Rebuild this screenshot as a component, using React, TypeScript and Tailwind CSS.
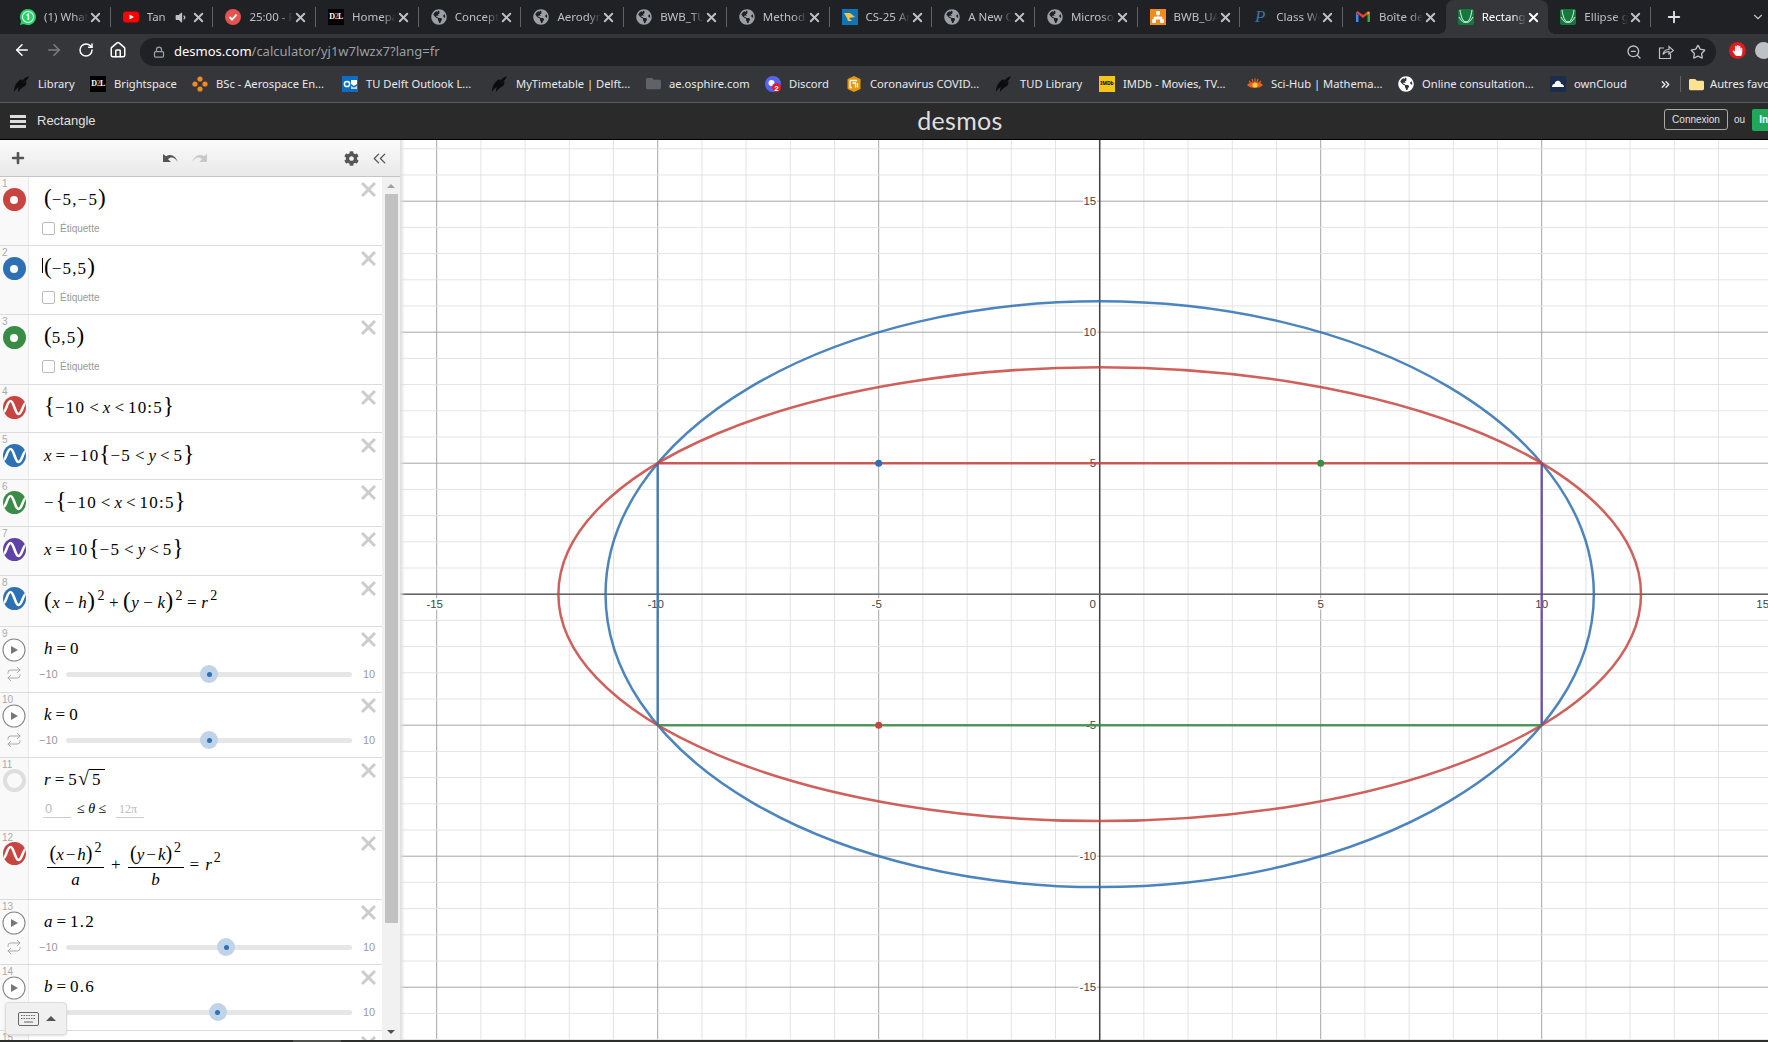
import { ArrowLeft, ArrowRight, ChevronDown, ChevronsLeft, ChevronsRight, Home, Lock, Plus, Repeat, RotateCw, Star, X, ZoomOut } from "lucide-react";
import { FaCog, FaFolder, FaGlobeAmericas, FaHandPaper, FaPlus, FaVolumeDown } from "react-icons/fa";
import type { ReactNode } from "react";

const RED = "#c74440";
const BLUE = "#2d70b3";
const GREEN = "#388c46";
const PURPLE = "#6042a6";

const Globe = ({ color = "#9aa0a6" }: { color?: string }) => <FaGlobeAmericas size={16} color={color} />;

const DesmosIcon = () => (
  <svg width="16" height="16" viewBox="0 0 16 16">
    <rect width="16" height="16" rx="2" fill="#127a3d" />
    <path d="M2 1C3 8 5 13 8 13S13 8 14 1M1 8C4 13 6 14 8 13C10 14 12 13 15 8" stroke="#fff" strokeWidth="0.9" fill="none" />
  </svg>
);

const D2L = () => (
  <span className="flex h-4 w-4 items-center justify-center bg-black font-['Liberation_Serif',serif] text-[8px] font-bold tracking-[-0.5px] text-white">
    D<span className="text-[#f08a24]">2</span>L
  </span>
);

const tabs: { label: string; icon: ReactNode; sound?: boolean }[] = [
  {
    label: "(1) WhatsApp",
    icon: (
      <svg width="16" height="16" viewBox="0 0 16 16">
        <path d="M8 0a8 8 0 0 0-6.8 12.2L0 16l3.9-1.1A8 8 0 1 0 8 0z" fill="#25d366" />
        <circle cx="8" cy="8" r="6" fill="#fff" />
        <circle cx="8" cy="8" r="5" fill="#25d366" />
        <path d="M6.6 6.4 8.4 5.2v5.8" stroke="#fff" strokeWidth="1.5" fill="none" />
      </svg>
    ),
  },
  {
    label: "Tan",
    sound: true,
    icon: (
      <svg width="16" height="16" viewBox="0 0 16 16">
        <rect y="2.5" width="16" height="11" rx="3" fill="#f00" />
        <path d="M6.5 5.5v5L11 8z" fill="#fff" />
      </svg>
    ),
  },
  {
    label: "25:00 - Pomodoro",
    icon: (
      <svg width="16" height="16" viewBox="0 0 16 16">
        <circle cx="8" cy="8" r="8" fill="#e5534f" />
        <path d="M4.5 8l2.5 2.6 4.6-5" stroke="#fff" strokeWidth="2" fill="none" />
      </svg>
    ),
  },
  { label: "Homepage", icon: <D2L /> },
  { label: "Concept", icon: <Globe /> },
  { label: "Aerodynamic", icon: <Globe /> },
  { label: "BWB_TUDelft", icon: <Globe /> },
  { label: "Methodology", icon: <Globe /> },
  {
    label: "CS-25 Amendment",
    icon: (
      <svg width="16" height="16" viewBox="0 0 16 16">
        <rect width="16" height="16" fill="#0f73b7" />
        <path d="M2 4h6l5 4-6 1 3 3H6L5 9 2 4z" fill="#f6c343" />
      </svg>
    ),
  },
  { label: "A New Concept", icon: <Globe /> },
  { label: "Microsoft", icon: <Globe /> },
  {
    label: "BWB_UAV",
    icon: (
      <svg width="16" height="16" viewBox="0 0 16 16">
        <rect width="16" height="16" fill="#f28a1c" />
        <path d="M6.5 2.5h3v3h-3zM2.5 10.5h3v3h-3zM10.5 10.5h3v3h-3zM4 10.5V8h8v2.5M8 5.5V8" fill="#fff" stroke="#fff" strokeWidth="0.8" />
      </svg>
    ),
  },
  {
    label: "Class Work",
    icon: <span className="flex w-4 justify-center font-['Liberation_Serif',serif] text-[17px] italic leading-4 text-[#3a73ad]">P</span>,
  },
  {
    label: "Boîte de réception",
    icon: (
      <svg width="16" height="16" viewBox="0 0 16 16">
        <path d="M1 3.5V13h2.5V6.5z" fill="#4285f4" />
        <path d="M15 3.5V13h-2.5V6.5z" fill="#34a853" />
        <path d="M1 3.5 8 9l7-5.5L13.5 2 8 6 2.5 2z" fill="#ea4335" />
        <path d="M12.5 2.7 15 3.5l-2.5 3z" fill="#fbbc04" />
      </svg>
    ),
  },
  { label: "Rectangle", icon: <DesmosIcon /> },
  { label: "Ellipse graph", icon: <DesmosIcon /> },
];

const Flame = () => (
  <svg width="16" height="16" viewBox="0 0 16 16">
    <path d="M15 0C11 2 9 3 8 5 8 3 7 3 6 4 3 6 0 10 0 16 2 13 3 12 5 11 4 13 4 14 4 16 6 13 9 11 11 10 12 9 13 7 12 5 11 6 10 7 9 7 12 5 14 3 15 0z" fill="#0c0c0c" />
  </svg>
);

const bookmarks: { label: string; width: string; icon: ReactNode }[] = [
  { label: "Library", width: "w-[76px]", icon: <Flame /> },
  { label: "Brightspace", width: "w-[102px]", icon: <D2L /> },
  {
    label: "BSc - Aerospace En...",
    width: "w-[150px]",
    icon: (
      <svg width="16" height="16" viewBox="0 0 16 16" fill="#f08a24">
        <circle cx="8" cy="3" r="2.6" />
        <circle cx="3" cy="8" r="2.6" />
        <circle cx="13" cy="8" r="2.6" />
        <circle cx="8" cy="13" r="2.6" />
      </svg>
    ),
  },
  {
    label: "TU Delft Outlook L...",
    width: "w-[150px]",
    icon: (
      <svg width="16" height="16" viewBox="0 0 16 16">
        <rect width="16" height="16" fill="#0f6cc4" />
        <circle cx="5" cy="8" r="2.6" stroke="#fff" strokeWidth="1.5" fill="none" />
        <path d="M9 4h6v4l-3 2-3-2z" fill="#fff" />
        <path d="M9 10l3 1.5 3-1.5v3H9z" fill="#bcdcf5" />
      </svg>
    ),
  },
  { label: "MyTimetable | Delft...", width: "w-[153px]", icon: <Flame /> },
  { label: "ae.osphire.com", width: "w-[120px]", icon: <FaFolder size={15} color="#5f6368" /> },
  {
    label: "Discord",
    width: "w-[81px]",
    icon: (
      <svg width="16" height="16" viewBox="0 0 16 16">
        <circle cx="8" cy="8" r="8" fill="#5865f2" />
        <circle cx="6.5" cy="7" r="3" fill="#fff" />
        <circle cx="11.5" cy="11.5" r="4.5" fill="#e01e2b" />
        <text x="11.5" y="14.5" textAnchor="middle" fontSize="8" fontWeight="700" fill="#fff" fontFamily="Liberation Sans">
          2
        </text>
      </svg>
    ),
  },
  {
    label: "Coronavirus COVID...",
    width: "w-[150px]",
    icon: (
      <svg width="16" height="16" viewBox="0 0 16 16">
        <path d="M8 0l6.5 3v10L8 16l-6.5-3V3z" fill="#e8950f" />
        <path d="M4 4.5h7M4 4.5v7h2M6.5 7h3v4.5M11.5 7v4.5" stroke="#fff" strokeWidth="1.3" fill="none" />
      </svg>
    ),
  },
  { label: "TUD Library", width: "w-[103px]", icon: <Flame /> },
  {
    label: "IMDb - Movies, TV...",
    width: "w-[148px]",
    icon: <span className="flex h-4 w-4 items-center justify-center bg-[#f5c518] text-[5px] font-bold text-black">IMDb</span>,
  },
  {
    label: "Sci-Hub | Mathema...",
    width: "w-[151px]",
    icon: (
      <svg width="16" height="16" viewBox="0 0 16 16">
        <path d="M0 9c3-4 13-4 16 0-3 4-13 4-16 0z" fill="#e8641b" />
        <circle cx="8" cy="9" r="2.5" fill="#f7d038" />
        <path d="M2 5l2 2M5 3l1 3M8 2.5V6M11 3l-1 3M14 5l-2 2" stroke="#e8641b" strokeWidth="1.2" />
      </svg>
    ),
  },
  { label: "Online consultation...", width: "w-[152px]", icon: <Globe color="#fff" /> },
  {
    label: "ownCloud",
    width: "w-[109px]",
    icon: (
      <svg width="16" height="16" viewBox="0 0 16 16">
        <rect width="16" height="16" fill="#1b2d4b" />
        <path d="M2 11c0-2 1-3 2.5-3C5 5.5 7 4 9 5c1.5.5 2 2 2 3 2 0 3 1.5 3 3z" fill="#fff" />
      </svg>
    ),
  },
];

const Paren = ({ children }: { children: ReactNode }) => <span className="text-[23px] font-light leading-none">{children}</span>;
const V = ({ children }: { children: ReactNode }) => <i className="italic">{children}</i>;
const Rel = ({ children }: { children: ReactNode }) => <span className="mx-[4px]">{children}</span>;
const Sup = () => <span className="ml-[2px] align-[8px] text-[14px] leading-none">2</span>;
const Num = ({ children }: { children: ReactNode }) => <span className="tracking-[1.2px]">{children}</span>;

const Frac = ({ top, bottom, width }: { top: ReactNode; bottom: ReactNode; width: string }) => (
  <span className={`inline-flex flex-col items-center align-middle ${width}`}>
    <span className="w-full whitespace-nowrap border-b border-black text-center leading-[24px]">{top}</span>
    <span className="leading-[24px]">{bottom}</span>
  </span>
);

type Row = {
  n: number;
  height: string;
  kind: "point" | "curve" | "slider" | "ring";
  color?: string;
  math: ReactNode;
  line?: string;
  thumb?: number;
};

const rows: Row[] = [
  { n: 1, height: "h-[69px]", kind: "point", color: RED, math: <><Paren>(</Paren><Num>−5,−5</Num><Paren>)</Paren></> },
  { n: 2, height: "h-[69px]", kind: "point", color: BLUE, math: <><Paren>(</Paren><Num>−5,5</Num><Paren>)</Paren></> },
  { n: 3, height: "h-[70px]", kind: "point", color: GREEN, math: <><Paren>(</Paren><Num>5,5</Num><Paren>)</Paren></> },
  { n: 4, height: "h-[48px]", kind: "curve", color: RED, math: <><Paren>{"{"}</Paren><Num>−10</Num><Rel>&lt;</Rel><V>x</V><Rel>&lt;</Rel><Num>10:5</Num><Paren>{"}"}</Paren></> },
  { n: 5, height: "h-[47px]", kind: "curve", color: BLUE, math: <><V>x</V><Rel>=</Rel><Num>−10</Num><Paren>{"{"}</Paren><Num>−5</Num><Rel>&lt;</Rel><V>y</V><Rel>&lt;</Rel><Num>5</Num><Paren>{"}"}</Paren></> },
  { n: 6, height: "h-[47px]", kind: "curve", color: GREEN, math: <><span className="mr-[2px]">−</span><Paren>{"{"}</Paren><Num>−10</Num><Rel>&lt;</Rel><V>x</V><Rel>&lt;</Rel><Num>10:5</Num><Paren>{"}"}</Paren></> },
  { n: 7, height: "h-[49px]", kind: "curve", color: PURPLE, math: <><V>x</V><Rel>=</Rel><Num>10</Num><Paren>{"{"}</Paren><Num>−5</Num><Rel>&lt;</Rel><V>y</V><Rel>&lt;</Rel><Num>5</Num><Paren>{"}"}</Paren></> },
  { n: 8, height: "h-[51px]", kind: "curve", color: BLUE, line: "h-[52px]", math: <span className="tracking-[0.5px]"><Paren>(</Paren><V>x</V><Rel>−</Rel><V>h</V><Paren>)</Paren><Sup /><Rel>+</Rel><Paren>(</Paren><V>y</V><Rel>−</Rel><V>k</V><Paren>)</Paren><Sup /><Rel>=</Rel><V>r</V><Sup /></span> },
  { n: 9, height: "h-[66px]", kind: "slider", thumb: 0, math: <><V>h</V><Rel>=</Rel><Num>0</Num></> },
  { n: 10, height: "h-[65px]", kind: "slider", thumb: 0, math: <><V>k</V><Rel>=</Rel><Num>0</Num></> },
  { n: 11, height: "h-[73px]", kind: "ring", math: <><V>r</V><Rel>=</Rel><Num>5</Num><span className="text-[20px] leading-none">√</span><span className="border-t border-black px-[3px]"><Num>5</Num></span></> },
  {
    n: 12,
    height: "h-[69px]",
    kind: "curve",
    color: RED,
    line: "h-[70px]",
    math: (
      <span className="ml-[3px]">
        <Frac width="w-[57px]" top={<><span className="text-[20px]">(</span><V>x</V><span className="mx-[2px]">−</span><V>h</V><span className="text-[20px]">)</span><Sup /></>} bottom={<V>a</V>} />
        <span className="mx-[7px]">+</span>
        <Frac width="w-[56px]" top={<><span className="text-[20px]">(</span><V>y</V><span className="mx-[2px]">−</span><V>k</V><span className="text-[20px]">)</span><Sup /></>} bottom={<V>b</V>} />
        <span className="mx-[6px]">=</span>
        <V>r</V>
        <Sup />
      </span>
    ),
  },
  { n: 13, height: "h-[65px]", kind: "slider", thumb: 1.2, math: <><V>a</V><Rel>=</Rel><Num>1.2</Num></> },
  { n: 14, height: "h-[66px]", kind: "slider", thumb: 0.6, math: <><V>b</V><Rel>=</Rel><Num>0.6</Num></> },
];

const CloseX = () => (
  <svg width="15" height="15" viewBox="0 0 15 15" className="absolute right-[6px] top-[5px]">
    <path d="M1 1l13 13M14 1 1 14" stroke="#ccc" strokeWidth="3" />
  </svg>
);

function RowIcon({ kind, color }: { kind: Row["kind"]; color?: string }) {
  if (kind === "point") {
    return (
      <span className="flex h-[23px] w-[23px] items-center justify-center rounded-full" style={{ backgroundColor: color }}>
        <span className="h-[8px] w-[8px] rounded-full bg-white" />
      </span>
    );
  }
  if (kind === "curve") {
    return (
      <svg width="23" height="23" viewBox="0 0 23 23" className="rounded-full" style={{ backgroundColor: color }}>
        <path d="M0 16C3 17 4 5 7.5 5 11 5 12 18 15.5 18 19 18 20 7 23 7" stroke="#fff" strokeWidth="2.6" fill="none" />
      </svg>
    );
  }
  if (kind === "slider") {
    return (
      <svg width="24" height="24" viewBox="0 0 24 24">
        <circle cx="12" cy="12" r="11" stroke="#888" strokeWidth="1.1" fill="#fff" />
        <path d="M9 8v8l7-4z" fill="#777" />
      </svg>
    );
  }
  return <span className="h-[23px] w-[23px] rounded-full border-[4px] border-[#dedede]" />;
}

function Slider({ value }: { value: number }) {
  return (
    <div className="flex h-[6px] items-center pl-[10px] font-['Liberation_Sans',sans-serif] text-[11px] text-[#999]">
      <span className="w-[27px]">−10</span>
      <div className="relative h-[5px] w-[286px] rounded-full bg-[#e6e6e6]">
        <span
          className="absolute top-1/2 flex h-[18px] w-[18px] -translate-x-1/2 -translate-y-1/2 items-center justify-center rounded-full bg-[#c0d3e8]"
          style={{ left: `${((value + 10) / 20) * 100}%` }}
        >
          <span className="h-[5px] w-[5px] rounded-full bg-[#2d70b3]" />
        </span>
      </div>
      <span className="ml-[11px]">10</span>
    </div>
  );
}

function ExpressionRow({ row }: { row: Row }) {
  return (
    <div className={`relative flex shrink-0 border-b border-[#dcdcdc] ${row.height}`}>
      <div className="flex w-[29px] shrink-0 flex-col border-r border-[#e8e8e8] bg-[#f9f9f9]">
        <span className="h-[11px] pl-[2px] pt-[2px] font-['Liberation_Sans',sans-serif] text-[10px] leading-[9px] text-[#aaa]">{row.n}</span>
        <span className="flex justify-center">
          <RowIcon kind={row.kind} color={row.color} />
        </span>
        {row.kind === "slider" && (
          <span className="mt-[4px] flex justify-center">
            <Repeat size={16} color="#aaa" strokeWidth={1.5} />
          </span>
        )}
      </div>
      <div className="min-w-0 flex-1">
        <div className={`flex items-center whitespace-nowrap pl-[15px] font-['Liberation_Serif',serif] text-[17px] text-black ${row.line ?? "h-[44px]"}`}>
          <span>{row.math}</span>
          {row.n === 2 && <span className="absolute left-[42px] top-[12px] h-[15px] w-px bg-black" />}
        </div>
        {row.kind === "point" && (
          <div className="flex h-[14px] items-center pl-[13px] font-['Liberation_Sans',sans-serif] text-[10px] text-[#999]">
            <span className="mr-[5px] h-[13px] w-[13px] rounded-[2px] border border-[#bbb] bg-white" />
            Étiquette
          </div>
        )}
        {row.kind === "slider" && <Slider value={row.thumb ?? 0} />}
        {row.kind === "ring" && (
          <div className="flex h-[16px] items-start pl-[14px] font-['Liberation_Serif',serif] text-[12px] text-black">
            <span className="h-[16px] w-[28px] border-b border-[#ccc] pl-[2px] font-['Liberation_Sans',sans-serif] text-[13px] leading-[14px] text-[#bbb]">0</span>
            <span className="ml-[6px] w-[39px] text-[14px] leading-[14px]">
              ≤ <i>θ</i> ≤
            </span>
            <span className="h-[16px] w-[28px] border-b border-[#ccc] pl-[3px] leading-[14px] text-[#bbb]">12π</span>
          </div>
        )}
      </div>
      <CloseX />
    </div>
  );
}

function Graph() {
  const ox = 699.7;
  const oy = 454.2;
  const ux = 44.2;
  const uy = 26.2;
  const xs = Array.from({ length: 31 }, (_, i) => i - 16);
  const ys = Array.from({ length: 37 }, (_, i) => i - 18);
  const px = (x: number) => ox + x * ux;
  const py = (y: number) => oy - y * uy;
  const xLabels = [-15, -10, -5, 5, 10, 15];
  const yLabels = [-15, -10, -5, 5, 10, 15];
  return (
    <svg width="1368" height="900" viewBox="0 0 1368 900" className="block">
      {xs.map((x) => (
        <line key={`v${x}`} x1={px(x)} x2={px(x)} y1="0" y2="900" stroke={x % 5 === 0 ? "#a6a6a6" : "#e3e3e3"} />
      ))}
      {ys.map((y) => (
        <line key={`h${y}`} y1={py(y)} y2={py(y)} x1="0" x2="1368" stroke={y % 5 === 0 ? "#a6a6a6" : "#e3e3e3"} />
      ))}
      <line x1={ox} x2={ox} y1="0" y2="900" stroke="#444" strokeWidth="1.5" />
      <line y1={oy} y2={oy} x1="0" x2="1368" stroke="#666" strokeWidth="1.5" />
      <g fontFamily="Liberation Sans, sans-serif" fontSize="11.5" fill="#444" stroke="#fff" strokeWidth="3" paintOrder="stroke">
        {xLabels.map((x) => (
          <text key={x} x={px(x) - (x < 0 ? 2 : 0)} y={oy + 14} textAnchor="middle">
            {x}
          </text>
        ))}
        <text x={ox - 7} y={oy + 14} textAnchor="middle">
          0
        </text>
        {yLabels.map((y) => (
          <text key={y} x={ox - 3.5} y={py(y) + 4} textAnchor="end">
            {y}
          </text>
        ))}
      </g>
      <g fill="none" strokeWidth="2.5" strokeOpacity="0.85">
        <ellipse cx={ox} cy={oy} rx={11.18 * ux} ry={11.18 * uy} stroke={BLUE} />
        <ellipse cx={ox} cy={oy} rx={12.247 * ux} ry={8.66 * uy} stroke={RED} />
        <line x1={px(-10)} x2={px(-10)} y1={py(5)} y2={py(-5)} stroke={BLUE} />
        <line x1={px(10)} x2={px(10)} y1={py(5)} y2={py(-5)} stroke={PURPLE} />
        <line x1={px(-10)} x2={px(10)} y1={py(5)} y2={py(5)} stroke={RED} />
        <line x1={px(-10)} x2={px(10)} y1={py(-5)} y2={py(-5)} stroke={GREEN} />
      </g>
      <circle cx={px(-5)} cy={py(5)} r="3.5" fill={BLUE} />
      <circle cx={px(5)} cy={py(5)} r="3.5" fill={GREEN} />
      <circle cx={px(-5)} cy={py(-5)} r="3.5" fill={RED} />
    </svg>
  );
}

export default function App() {
  return (
    <div className="flex h-[1042px] w-[1768px] flex-col overflow-hidden bg-[#202124] font-['Noto_Sans',sans-serif]">
      {/* tab strip */}
      <div className="flex h-[34px] shrink-0 items-center pl-2 text-[11.5px]">
        {tabs.map(({ label, icon, sound }) => {
          const active = label === "Rectangle";
          return (
            <div
              key={label}
              className={`relative flex h-[34px] w-[102.7px] shrink-0 items-center pl-3 ${active ? "rounded-t-[8px] bg-[#35363a] text-white" : "text-[#bdc1c6]"}`}
            >
              {active && (
                <>
                  <span className="absolute bottom-0 left-[-8px] h-[8px] w-[8px] bg-[radial-gradient(circle_at_0_0,transparent_8px,#35363a_8px)]" />
                  <span className="absolute bottom-0 right-[-8px] h-[8px] w-[8px] bg-[radial-gradient(circle_at_100%_0,transparent_8px,#35363a_8px)]" />
                </>
              )}
              <span className="flex h-4 w-4 shrink-0 items-center justify-center">{icon}</span>
              <span
                className={`ml-2 overflow-hidden whitespace-nowrap [mask-image:linear-gradient(to_right,black_70%,transparent)] ${sound ? "w-[24px]" : "w-[44px]"}`}
              >
                {label}
              </span>
              {sound && (
                <span className="flex w-[20px] justify-center">
                  <FaVolumeDown size={13} />
                </span>
              )}
              <X size={15} strokeWidth={3} color={active ? "#fff" : "#bdc1c6"} className="shrink-0" />
              {!active && label !== "Boîte de réception" && <span className="ml-auto h-[20px] w-px bg-[#5f6368]" />}
            </div>
          );
        })}
        <Plus size={18} color="#dee1e6" strokeWidth={2.5} className="ml-[14px] shrink-0" />
        <ChevronDown size={14} color="#bdc1c6" className="ml-[68px] shrink-0" />
      </div>

      {/* address bar */}
      <div className="flex h-[32px] shrink-0 items-center bg-[#35363a] pl-[13px]">
        <ArrowLeft size={18} color="#fff" strokeWidth={2} className="shrink-0" />
        <ArrowRight size={18} color="#7d7f83" strokeWidth={2} className="ml-[14px] shrink-0" />
        <RotateCw size={16} color="#fff" strokeWidth={2.2} className="ml-[15px] shrink-0" />
        <Home size={18} color="#fff" strokeWidth={2} className="ml-[15px] shrink-0" />
        <div className="ml-[13px] mt-[4px] flex h-[28px] w-[1576px] shrink-0 items-center rounded-full bg-[#202124] pl-[13px] pr-[10px]">
          <Lock size={12} color="#9aa0a6" strokeWidth={2.5} />
          <span className="ml-[9px] text-[13px] text-white">
            desmos.com<span className="text-[#9aa0a6]">/calculator/yj1w7lwzx7?lang=fr</span>
          </span>
          <span className="ml-auto flex items-center gap-[16px]">
            <ZoomOut size={16} color="#bdc1c6" />
            <svg width="16" height="16" viewBox="0 0 16 16" fill="none" stroke="#bdc1c6" strokeWidth="1.2">
              <path d="M6 4H1.5v10.5h11V10" />
              <path d="M5 10.5C5.5 7 8 5.5 11 5.5V2.5L15.5 6.5 11 10V7.5C8.5 7.5 6.5 8.5 5 10.5z" />
            </svg>
            <Star size={16} color="#bdc1c6" strokeWidth={2} />
          </span>
        </div>
        <span className="ml-[13px] flex h-[17px] w-[17px] shrink-0 items-center justify-center rounded-full bg-[#e01b1b]">
          <FaHandPaper size={11} color="#fff" />
        </span>
        <span className="ml-[9px] h-[17px] w-[17px] shrink-0 rounded-full bg-[#bdc1c6]" />
      </div>

      {/* bookmarks */}
      <div className="flex h-[37px] shrink-0 items-center border-b border-[#5a5b5e] bg-[#35363a] pl-[14px] text-[11.2px] text-[#e8eaed]">
        {bookmarks.map(({ label, width, icon }) => (
          <div key={label} className={`flex shrink-0 items-center gap-2 whitespace-nowrap ${width}`}>
            <span className="flex h-4 w-4 shrink-0 items-center justify-center">{icon}</span>
            {label}
          </div>
        ))}
        <ChevronsRight size={13} color="#e8eaed" strokeWidth={2.5} className="shrink-0" />
        <span className="ml-[8px] h-[16px] w-px shrink-0 bg-[#5f6368]" />
        <span className="ml-[7px] flex w-4 shrink-0 justify-center">
          <FaFolder size={15} color="#fde293" />
        </span>
        <span className="ml-[6px] shrink-0 whitespace-nowrap">Autres favoris</span>
      </div>

      {/* desmos header */}
      <div className="flex h-[37px] shrink-0 items-center border-b border-black bg-[#2a2a2a] pl-[10px] font-['Liberation_Sans',sans-serif] text-[#e0e0e0]">
        <div className="flex w-[907px] shrink-0 items-center">
          <span className="flex h-[13px] w-[16px] flex-col justify-between">
            <span className="h-[3px] bg-[#ddd]" />
            <span className="h-[3px] bg-[#ddd]" />
            <span className="h-[3px] bg-[#ddd]" />
          </span>
          <span className="ml-[11px] text-[13px]">Rectangle</span>
        </div>
        <span className="-mt-[2px] w-[86px] shrink-0 text-center font-['Lato',sans-serif] text-[25px] leading-none tracking-[0.3px] text-[#dfdfdf]">desmos</span>
        <div className="-mt-[3px] ml-[661px] flex shrink-0 items-center text-[10px]">
          <span className="flex h-[21px] w-[64px] items-center justify-center rounded-[3px] border border-[#aaa]">Connexion</span>
          <span className="ml-[6px]">ou</span>
          <span className="ml-[7px] flex h-[22px] w-[60px] items-center rounded-[2px] bg-[#1fa85a] pl-[7px] font-bold text-white">Inscrivez</span>
        </div>
      </div>

      {/* calculator */}
      <div className="flex h-[900px] shrink-0 bg-white">
        <aside className="relative flex h-full w-[400px] shrink-0 flex-col">
          <div className="flex h-[37px] shrink-0 items-center border-b border-[#c4c4c4] bg-gradient-to-b from-[#fbfbfb] to-[#e9e9e9] pl-[11px] text-[#555]">
            <FaPlus size={14} className="shrink-0" />
            <svg width="17" height="11" viewBox="0 0 17 11" fill="#555" className="ml-[137px] shrink-0">
              <path d="M1 1v8h8L6 6.2C9 3.5 13 4 16 9.5 14 3 9 0 4 3.2z" />
            </svg>
            <svg width="17" height="11" viewBox="0 0 17 11" fill="#c8c8c8" className="ml-[12px] shrink-0 -scale-x-100">
              <path d="M1 1v8h8L6 6.2C9 3.5 13 4 16 9.5 14 3 9 0 4 3.2z" />
            </svg>
            <FaCog size={15} className="ml-[136px] shrink-0" />
            <ChevronsLeft size={21} strokeWidth={1.5} className="ml-[10px] shrink-0" />
          </div>
          <div className="flex min-h-0 flex-1">
            <div className="flex w-[382px] shrink-0 flex-col overflow-hidden">
              {rows.map((row) => (
                <ExpressionRow key={row.n} row={row} />
              ))}
              <div className="relative flex flex-1">
                <div className="w-[29px] border-r border-[#e8e8e8] bg-[#f9f9f9] pl-[2px] pt-[2px] font-['Liberation_Sans',sans-serif] text-[10px] leading-[9px] text-[#aaa]">15</div>
                <CloseX />
              </div>
            </div>
            <div className="flex w-[18px] shrink-0 flex-col items-center bg-[#f1f1f1]">
              <span className="flex h-[17px] shrink-0 items-center justify-center">
                <span className="h-0 w-0 border-x-[4px] border-b-[4px] border-x-transparent border-b-[#a0a0a0]" />
              </span>
              <span className="h-[729px] w-[13px] shrink-0 bg-[#c1c1c1]" />
              <span className="mt-auto flex h-[17px] shrink-0 items-center justify-center">
                <span className="h-0 w-0 border-x-[4px] border-t-[4px] border-x-transparent border-t-[#505050]" />
              </span>
            </div>
          </div>
          <div className="absolute bottom-[5px] left-[5px] flex h-[33px] w-[62px] items-center rounded-[4px] border border-[#ddd] bg-[#f0f0f0] pl-[12px] shadow-sm">
            <svg width="21" height="14" viewBox="0 0 21 14" fill="none" stroke="#666">
              <rect x="0.5" y="0.5" width="20" height="13" rx="1.5" />
              <path d="M3 3.5h15M3 6.5h15" strokeDasharray="1.5 1" />
              <path d="M6 10h9" />
            </svg>
            <span className="ml-[7px] h-0 w-0 border-x-[5px] border-b-[5px] border-x-transparent border-b-[#555]" />
          </div>
        </aside>
        <div className="relative min-w-0 flex-1">
          <Graph />
          <span className="absolute inset-y-0 left-0 w-[5px] bg-gradient-to-r from-[#dcdcdc] to-transparent" />
        </div>
      </div>

      {/* taskbar edge */}
      <div className="flex h-[2px] shrink-0 bg-[#2a302b] pl-[293px]">
        <span className="h-full w-[48px] bg-[#4d524e]" />
      </div>
    </div>
  );
}
